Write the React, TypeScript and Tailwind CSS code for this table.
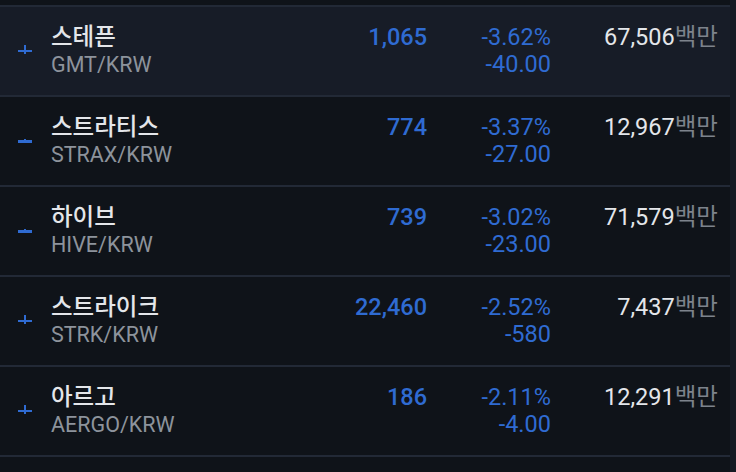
import React from 'react';

type Coin = {
    name: string;
    ticker: string;
    price: string;
    rate: string;
    diff: string;
    volume: string;
    candle: 'cross' | 'body';
};

const coins: Coin[] = [
    { name: '스테픈', ticker: 'GMT/KRW', price: '1,065', rate: '-3.62%', diff: '-40.00', volume: '67,506', candle: 'cross' },
    { name: '스트라티스', ticker: 'STRAX/KRW', price: '774', rate: '-3.37%', diff: '-27.00', volume: '12,967', candle: 'body' },
    { name: '하이브', ticker: 'HIVE/KRW', price: '739', rate: '-3.02%', diff: '-23.00', volume: '71,579', candle: 'body' },
    { name: '스트라이크', ticker: 'STRK/KRW', price: '22,460', rate: '-2.52%', diff: '-580', volume: '7,437', candle: 'cross' },
    { name: '아르고', ticker: 'AERGO/KRW', price: '186', rate: '-2.11%', diff: '-4.00', volume: '12,291', candle: 'cross' },
];

// tiny candle drawn next to each market
const Candle = ({ kind }: { kind: Coin['candle'] }) => (
    <svg width="14" height="10" viewBox="0 0 14 10" className="block">
        {kind === 'cross' ? (
            <>
                <rect x="0" y="5" width="14" height="2" fill="#2f6bd2" />
                <rect x="6" y="0" width="2" height="9" fill="#2f6bd2" />
            </>
        ) : (
            <>
                <rect x="0" y="5" width="14" height="3" fill="#2f6bd2" />
                <rect x="6" y="4" width="2" height="1" fill="#2f6bd2" />
            </>
        )}
    </svg>
);

const Row = ({ coin, active }: { coin: Coin; active: boolean }) => (
    <div
        className={`flex h-[90px] items-start border-b-2 border-[#222936] ${
            active ? 'bg-[#171c27]' : 'bg-[#0f1319]'
        }`}
    >
        <div className="flex h-full w-[51px] items-center pl-[18px] pb-[2px]">
            <Candle kind={coin.candle} />
        </div>
        <div className="flex-1 pt-[17px]">
            <div className="text-[23.5px] leading-[27px] font-medium text-[#e4e6ea]">{coin.name}</div>
            <div className="text-[21.5px] leading-[27px] text-[#8d939c]">{coin.ticker}</div>
        </div>
        <div className="w-[120px] pt-[17px] text-right text-[23.5px] leading-[27px] font-medium text-[#2f6bd2]">
            {coin.price}
        </div>
        <div className="w-[124px] pt-[17px] text-right text-[23.5px] leading-[27px] text-[#2f6bd2]">
            <div>{coin.rate}</div>
            <div>{coin.diff}</div>
        </div>
        <div className="w-[167px] pt-[17px] pr-[12px] text-right text-[23.5px] leading-[27px] box-content">
            <span className="text-[#e4e6ea]">{coin.volume}</span>
            <span className="text-[#7d838c]">백만</span>
        </div>
    </div>
);

export default function App() {
    return (
        <div className="flex h-[472px] w-[736px] overflow-hidden bg-[#0f1319] font-['Roboto','Noto_Sans_CJK_KR',sans-serif]">
            <div className="w-[730px]">
                <div className="h-[7px] border-b-2 border-[#222936] bg-[#0f1319]" />
                {coins.map((c, i) => (
                    <Row key={c.ticker} coin={c} active={i === 0} />
                ))}
            </div>
            <div className="w-[6px] bg-[#151922]" />
        </div>
    );
}
